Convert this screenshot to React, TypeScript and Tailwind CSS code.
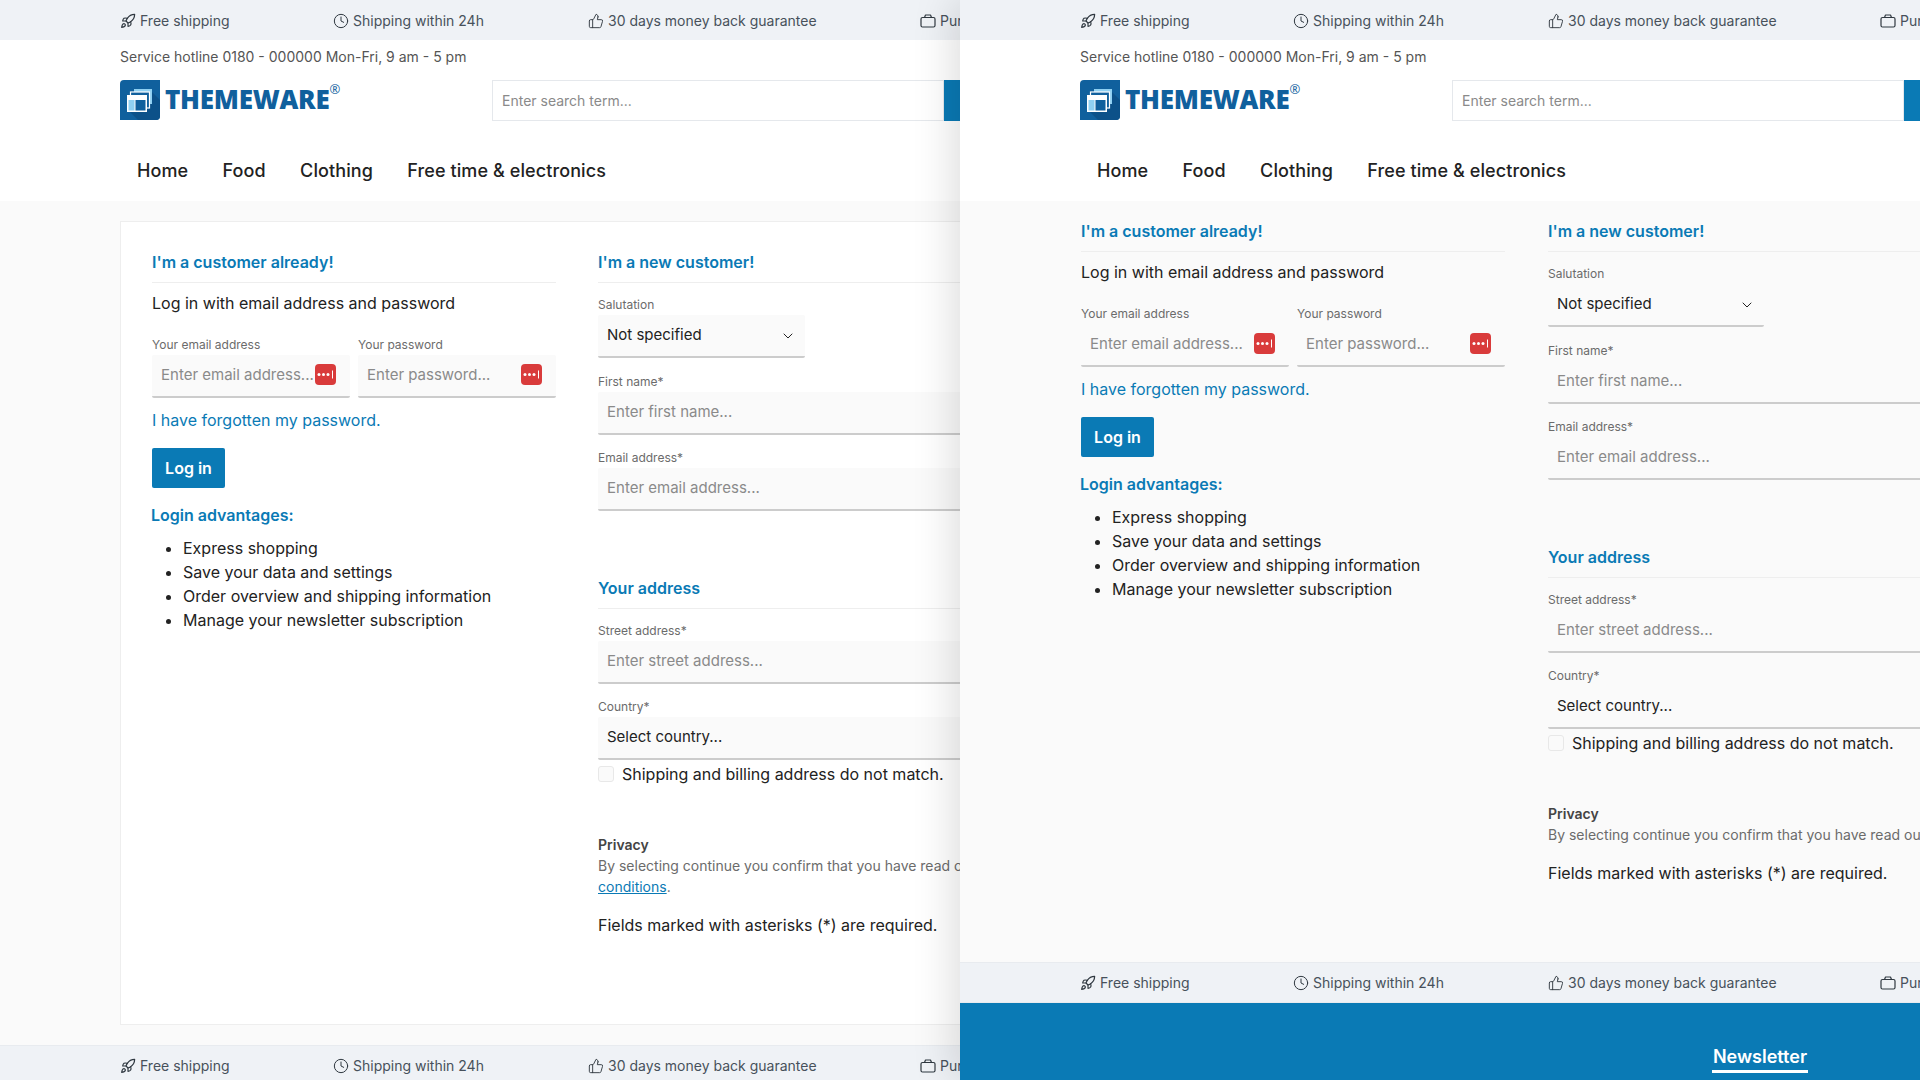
import { Rocket, Clock, ThumbsUp, ChevronDown, Search } from "lucide-react";

const blue = "text-[#0a7ab5]";

function BriefcaseIcon() {
  return (
    <svg width="16" height="16" viewBox="0 0 16 16" fill="none" stroke="currentColor" strokeWidth="1.2" strokeLinejoin="round" className="text-[#2f3840] shrink-0">
      <rect x="1" y="4.5" width="14" height="9.5" rx="1.5" />
      <path d="M4.5 4.5L5.5 2H10.5L11.5 4.5" />
    </svg>
  );
}

function Bar({ footer }: { footer?: boolean }) {
  const icon = "text-[#2f3840] shrink-0";
  return (
    <div className={`flex items-center shrink-0 bg-[#eff2f6] pl-[120px] text-sm text-[#47515b] whitespace-nowrap ${footer ? "h-[41px] border-y border-[#e8ebef]" : "h-10 pt-px"}`}>
      <div className="flex items-center gap-1 w-[213px] shrink-0"><Rocket size={16} strokeWidth={1.75} className={icon} />Free shipping</div>
      <div className="flex items-center gap-1 w-[255px] shrink-0"><Clock size={16} strokeWidth={1.5} className={icon} />Shipping within 24h</div>
      <div className="flex items-center gap-1 w-[332px] shrink-0"><ThumbsUp size={16} strokeWidth={1.4} className={icon} />30 days money back guarantee</div>
      <div className="flex items-center gap-1 shrink-0"><BriefcaseIcon />Purchase on account</div>
    </div>
  );
}

function Logo() {
  return (
    <div className="flex items-start w-[372px] h-10 shrink-0">
      <svg width="40" height="40" viewBox="0 0 40 40" className="shrink-0">
        <path d="M4 0H40V36a4 4 0 0 1-4 4H0V4a4 4 0 0 1 4-4z" fill="#10609d" />
        <path d="M30 10L40 20V36a4 4 0 0 1-4 4H18L8 30z" fill="#0c5189" />
        <rect x="14" y="9" width="18" height="15" fill="#8fd0f2" />
        <rect x="10.5" y="12" width="19" height="16" fill="#10609d" stroke="#ffffff" strokeWidth="1.2" />
        <rect x="7" y="15" width="20" height="17" fill="#ffffff" />
        <rect x="8.5" y="20" width="6" height="10.5" fill="#8fd0f2" />
        <rect x="15.5" y="20" width="10" height="10.5" fill="#10609d" />
      </svg>
      <span className="ml-[5px] text-[26px] leading-[38px] font-extrabold font-['Open_Sans',sans-serif] text-[#10609d] tracking-[-0.25px]">THEMEWARE</span>
      <span className="text-[13px] leading-[13px] mt-[3px] font-['Open_Sans',sans-serif] text-[#10609d]">®</span>
    </div>
  );
}

function Header() {
  return (
    <div className="shrink-0 bg-white h-[161px]">
      <div className="pl-[120px] h-10 flex items-center text-sm text-[#555555] whitespace-nowrap pb-[6px]">Service hotline 0180 - 000000 Mon-Fri, 9 am - 5 pm</div>
      <div className="flex pl-[120px]">
        <Logo />
        <div className="flex h-[41px] shrink-0">
          <input placeholder="Enter search term..." className="w-[452px] h-full border border-[#e5e8ec] pl-[9px] text-sm bg-white placeholder:text-[#8a8a8a] outline-none" />
          <div className="w-14 h-full bg-[#0a7ab5] flex items-center pl-[15px] text-white"><Search size={18} /></div>
        </div>
      </div>
      <nav className="flex pl-[137px] gap-[34.3px] mt-[37px] text-lg leading-[26px] font-medium tracking-[0.1px] text-[#222222] whitespace-nowrap">
        <span>Home</span><span>Food</span><span>Clothing</span><span>Free time &amp; electronics</span>
      </nav>
    </div>
  );
}

function Heading({ children }: { children: string }) {
  return <h2 className={`text-base leading-6 font-semibold pb-2 border-b border-[#eeeeee] ${blue}`}>{children}</h2>;
}

function Label({ children }: { children: string }) {
  return <div className="text-xs leading-4 text-[#6b6b6b] mb-[2px]">{children}</div>;
}

function Field({ placeholder }: { placeholder: string }) {
  return <input placeholder={placeholder} className="block w-full h-[43px] bg-[#fafafa] border-b-2 border-[#cccccc] rounded-[2px] px-[9px] pb-[2px] text-[15px] text-[#222222] placeholder:text-[#8a8a8a] outline-none" />;
}

function PasswordBadge() {
  return (
    <svg width="21" height="21" viewBox="0 0 21 21" className="absolute right-[14px] top-[9px]">
      <rect width="21" height="21" rx="4" fill="#d93b3b" />
      <circle cx="4" cy="10.5" r="1.5" fill="#fff" />
      <circle cx="8.5" cy="10.5" r="1.5" fill="#fff" />
      <circle cx="13" cy="10.5" r="1.5" fill="#fff" />
      <rect x="17" y="6.5" width="1" height="8" fill="#fff" />
    </svg>
  );
}

function LoginColumn({ width }: { width: string }) {
  return (
    <div className={`shrink-0 ${width}`}>
      <Heading>I'm a customer already!</Heading>
      <p className="mt-2 text-base leading-6 text-[#222222]">Log in with email address and password</p>
      <div className="grid grid-cols-2 gap-2 mt-[22px]">
        <div>
          <Label>Your email address</Label>
          <div className="relative"><Field placeholder="Enter email address..." /><PasswordBadge /></div>
        </div>
        <div>
          <Label>Your password</Label>
          <div className="relative"><Field placeholder="Enter password..." /><PasswordBadge /></div>
        </div>
      </div>
      <a className={`block mt-[10px] text-base leading-6 ${blue}`}>I have forgotten my password.</a>
      <button className="block mt-4 w-[73px] h-10 bg-[#0a7ab5] rounded-[2px] text-white text-base font-semibold">Log in</button>
      <h3 className={`mt-[15px] -ml-px text-base leading-6 font-semibold ${blue}`}>Login advantages:</h3>
      <ul className="mt-[9px] list-disc pl-[31px] text-base leading-6 text-[#222222]">
        <li>Express shopping</li>
        <li>Save your data and settings</li>
        <li>Order overview and shipping information</li>
        <li>Manage your newsletter subscription</li>
      </ul>
    </div>
  );
}

function RegisterColumn({ width, selectWidth }: { width: string; selectWidth: string }) {
  return (
    <div className={`shrink-0 ${width}`}>
      <Heading>I'm a new customer!</Heading>
      <div className="mt-[14px]"><Label>Salutation</Label></div>
      <div className={`flex items-center justify-between h-[43px] bg-[#fafafa] border-b-2 border-[#cccccc] rounded-[2px] pl-[9px] pr-[9px] text-[15px] text-[#222222] ${selectWidth}`}>
        Not specified <ChevronDown size={16} strokeWidth={1.5} />
      </div>
      <div className="mt-4"><Label>First name*</Label></div>
      <Field placeholder="Enter first name..." />
      <div className="mt-[15px]"><Label>Email address*</Label></div>
      <Field placeholder="Enter email address..." />
      <div className="mt-[65px]"><Heading>Your address</Heading></div>
      <div className="mt-[14px]"><Label>Street address*</Label></div>
      <Field placeholder="Enter street address..." />
      <div className="mt-[15px]"><Label>Country*</Label></div>
      <div className="flex items-center w-full h-[43px] bg-[#fafafa] border-b-2 border-[#cccccc] rounded-[2px] px-[9px] text-[15px] text-[#222222]">Select country...</div>
      <label className="flex items-center mt-[2px] h-6 text-base text-[#222222]">
        <span className="w-4 h-4 rounded-[3px] border border-[#e8e8e8] bg-[#fafafa] mr-2 shrink-0" />
        Shipping and billing address do not match.
      </label>
      <div className="mt-[49px] text-sm leading-5 font-semibold text-[#444444]">Privacy</div>
      <p className="text-sm leading-[21px] text-[#6b6b6b]">
        By selecting continue you confirm that you have read our data protection information and accept the terms and{" "}
        <a className={`underline ${blue}`}>conditions</a>.
      </p>
      <p className="mt-4 text-base leading-6 text-[#222222]">Fields marked with asterisks (*) are required.</p>
    </div>
  );
}

export default function App() {
  return (
    <div className="flex w-[1920px] h-[1080px] overflow-hidden font-['Inter',sans-serif]">
      <section className="flex flex-col w-[960px] h-[1080px] overflow-hidden shrink-0 bg-[#fafafa]">
        <Bar />
        <Header />
        <main className="shrink-0 h-[844px] pl-[120px] pt-5">
          <div className="flex w-[900px] h-[804px] bg-white border border-[#eeeeee] pl-[31px] pt-[28px] gap-[42px]">
            <LoginColumn width="w-[404px]" />
            <RegisterColumn width="w-[760px]" selectWidth="w-[207px]" />
          </div>
        </main>
        <Bar footer />
      </section>
      <section className="relative z-10 flex flex-col w-[960px] h-[1080px] overflow-hidden shrink-0 bg-[#fafafa] shadow-[-6px_0_40px_rgba(0,0,0,0.14)]">
        <Bar />
        <Header />
        <main className="flex shrink-0 h-[761px] pl-[121px] pt-[18px] gap-[43px]">
          <LoginColumn width="w-[424px]" />
          <RegisterColumn width="w-[900px]" selectWidth="w-[216px]" />
        </main>
        <Bar footer />
        <div className="flex-1 bg-[#0a7ab5] pl-[752px] pt-[42px]">
          <div className="w-[96px] text-lg leading-6 font-semibold text-white text-center border-b-[3px] border-white h-[28px]">Newsletter</div>
        </div>
      </section>
    </div>
  );
}
